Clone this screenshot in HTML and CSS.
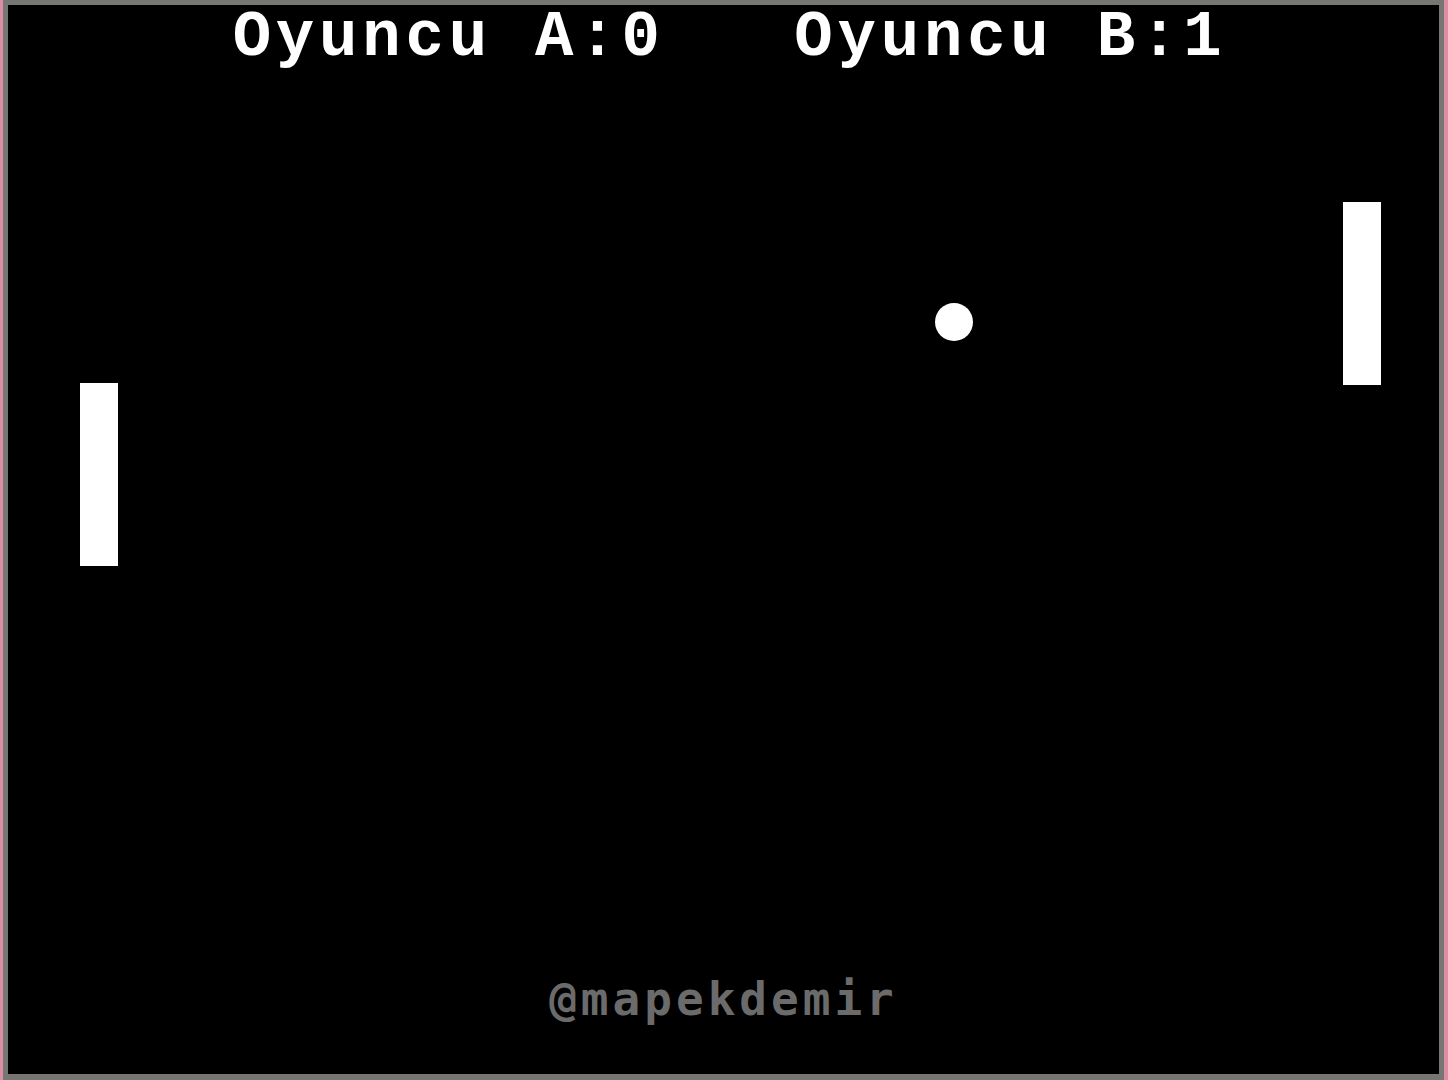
FILE: index.html
```html
<!DOCTYPE html>
<html lang="tr">
<head>
<meta charset="utf-8">
<title>Pong</title>
<link rel="stylesheet" href="styles.css">
</head>
<body>
<div class="window">
  <div class="canvas">
    <div class="score">Oyuncu A:0   Oyuncu B:1</div>
    <div class="paddle paddle-a"></div>
    <div class="paddle paddle-b"></div>
    <div class="ball"></div>
    <div class="watermark">@mapekdemir</div>
  </div>
</div>
</body>
</html>
```

FILE: styles.css
```css
html, body {
  margin: 0;
  padding: 0;
  background: #777773;
}
.window {
  width: 1448px;
  height: 1080px;
  box-sizing: border-box;
  border-left: 3px solid #dd8ea6;
  border-right: 4px solid #dd8ea6;
  background: #767672;
  padding: 5px 5px 6px 5px;
}
.canvas {
  position: relative;
  height: 100%;
  background: #000;
  display: flex;
  flex-direction: column;
  align-items: center;
}
.score {
  font-family: "Liberation Mono", "Courier New", monospace;
  font-weight: bold;
  font-size: 64px;
  line-height: 66px;
  letter-spacing: 4.8px;
  color: #fff;
  white-space: pre;
  margin-left: 12px;
}
.watermark {
  margin-top: auto;
  margin-bottom: 52px;
  font-family: "DejaVu Sans Mono", monospace;
  font-weight: bold;
  font-size: 46px;
  line-height: 46px;
  color: #6b6b6b;
  letter-spacing: 4px;
}
.paddle {
  position: absolute;
  background: #fff;
  width: 38px;
  height: 183px;
}
.paddle-a {
  left: 72px;
  top: 378px;
}
.paddle-b {
  left: 1335px;
  top: 197px;
}
.ball {
  position: absolute;
  left: 927px;
  top: 298px;
  width: 38px;
  height: 38px;
  border-radius: 50%;
  background: #fff;
}
```
